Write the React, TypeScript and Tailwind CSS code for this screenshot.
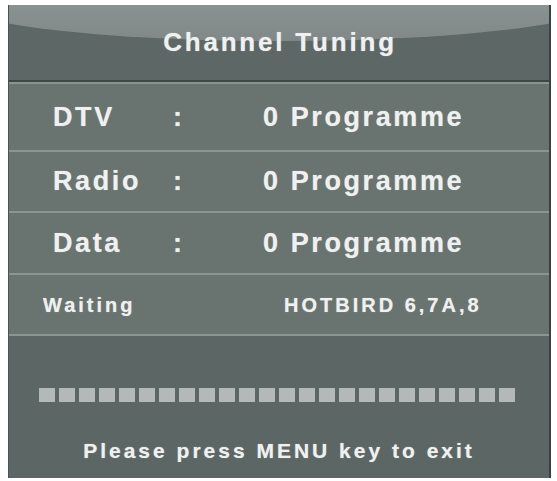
import React from "react";

const rows = [
  { label: "DTV", value: "0 Programme", h: "h-[66px]" },
  { label: "Radio", value: "0 Programme", h: "h-[59px]" },
  { label: "Data", value: "0 Programme", h: "h-[60px]" },
];

export default function App() {
  return (
    <div
      className="h-[481px] w-[557px] bg-white pl-[8px] pt-[5px]"
      style={{ fontFamily: '"Liberation Sans", Arial, sans-serif' }}
    >
      <div className="flex h-[473px] w-[543px] flex-col border-l border-r-2 border-l-[#4a5351] border-r-[#3a4241] bg-[#5e6967] text-[#eef1f0] font-bold [text-shadow:0_0_1px_rgba(255,255,255,0.5)]">
        {/* title */}
        <div className="relative flex h-[75px] items-center justify-center overflow-hidden bg-[#5d6866]">
          <div className="absolute -left-[10%] -top-[42px] h-[78px] w-[120%] rounded-[50%] bg-gradient-to-b from-[#949d9c] to-[#808988]" />
          <span className="relative pl-[2px] text-[26px] tracking-[2.8px]">Channel Tuning</span>
        </div>
        <div className="h-[2px] bg-[#3f4746]" />
        <div className="h-[2px] bg-[#8a9492]" />

        {rows.map((r) => (
          <React.Fragment key={r.label}>
            <div className={`flex items-center bg-[#69736f] pl-[44px] text-[27px] tracking-[2.6px] ${r.h}`}>
              <span className="w-[120px]">{r.label}</span>
              <span className="w-[90px]">:</span>
              <span>{r.value}</span>
            </div>
            <div className="h-[2px] bg-[#8a9492]" />
          </React.Fragment>
        ))}

        <div className="flex h-[59px] items-center bg-[#69736f] pl-[34px] text-[20px] tracking-[3px]">
          <span className="w-[241px]">Waiting</span>
          <span>HOTBIRD 6,7A,8</span>
        </div>
        <div className="h-[2px] bg-[#8a9492]" />

        <div className="flex flex-1 flex-col items-center bg-[#5c6765]">
          <div className="mt-[52px] mr-[5px] flex gap-[4px]">
            {Array.from({ length: 24 }).map((_, i) => (
              <div key={i} className="h-[14px] w-[16px] bg-[#b3b9b8]" />
            ))}
          </div>
          <div className="mt-[33px] text-[21px] tracking-[3px]">Please press MENU key to exit</div>
        </div>
      </div>
    </div>
  );
}
